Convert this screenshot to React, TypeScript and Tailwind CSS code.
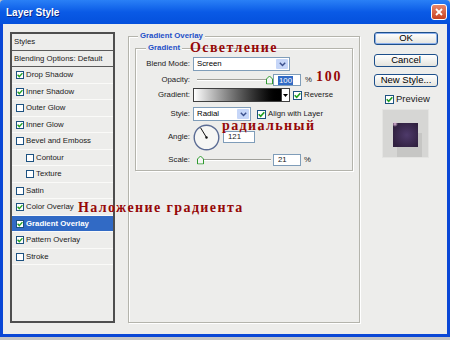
import React from "react";

const items: { t: string; c: boolean; i?: boolean; s?: boolean }[] = [
  { t: "Drop Shadow", c: true },
  { t: "Inner Shadow", c: true },
  { t: "Outer Glow", c: false },
  { t: "Inner Glow", c: true },
  { t: "Bevel and Emboss", c: false },
  { t: "Contour", c: false, i: true },
  { t: "Texture", c: false, i: true },
  { t: "Satin", c: false },
  { t: "Color Overlay", c: true },
  { t: "Gradient Overlay", c: true, s: true },
  { t: "Pattern Overlay", c: true },
  { t: "Stroke", c: false },
];

function Check({ checked, size = 8 }: { checked: boolean; size?: number }) {
  return (
    <span
      className="border border-[#1c5180] bg-white flex items-center justify-center shrink-0"
      style={{ width: size, height: size }}
    >
      {checked && (
        <svg width={size - 2} height={size - 2} viewBox="0 0 6 6">
          <path d="M0.6 2.8 L2.3 4.6 L5.4 1.1" stroke="#22a022" strokeWidth="1.4" fill="none" />
        </svg>
      )}
    </span>
  );
}

function Chevron() {
  return (
    <svg width="7" height="5" viewBox="0 0 7 5">
      <path d="M0.8 0.8 L3.5 3.6 L6.2 0.8" stroke="#3a4f8c" strokeWidth="1.4" fill="none" />
    </svg>
  );
}

function Select({ w, value }: { w: number; value: string }) {
  return (
    <div className="flex h-full border border-[#7f9db9] bg-white items-center shrink-0" style={{ width: w }}>
      <span className="flex-1 pl-[3px] text-black">{value}</span>
      <span className="w-[12px] h-[calc(100%-2px)] mr-[1px] bg-[#c6d6f8] rounded-[1px] flex items-center justify-center">
        <Chevron />
      </span>
    </div>
  );
}

function Thumb() {
  return (
    <svg width="7" height="9" viewBox="0 0 7 9">
      <path d="M0.5 8.5 L0.5 3.5 L3.5 0.5 L6.5 3.5 L6.5 8.5 Z" fill="#f4f4f4" stroke="#2f9a2f" strokeWidth="1" />
    </svg>
  );
}

function Slider({ pos }: { pos: number }) {
  return (
    <div className="relative w-[80px] h-full shrink-0 flex items-center">
      <div className="ml-[4px] w-[74px] h-[2px] border-t border-[#a0a09a] border-b border-b-white" />
      <div className="absolute top-1/2 -translate-y-1/2 flex" style={{ left: pos }}>
        <Thumb />
      </div>
    </div>
  );
}

function Label({ children }: { children: React.ReactNode }) {
  return <span className="w-[54px] text-right shrink-0 text-[#1a1a1a]">{children}</span>;
}

function Input({ w, children }: { w: number; children: React.ReactNode }) {
  return (
    <div className="h-full border border-[#7f9db9] bg-white flex items-center pl-[4px] shrink-0" style={{ width: w }}>
      {children}
    </div>
  );
}

function Button({ children, focus }: { children: React.ReactNode; focus?: boolean }) {
  return (
    <div
      className={
        "h-[13px] w-[64px] rounded-[3px] border border-[#1d4f8a] bg-gradient-to-b from-[#ffffff] to-[#e4e4de] flex items-center justify-center text-[9.5px] text-black " +
        (focus ? "shadow-[inset_0_0_0_1px_#8cb0ec]" : "")
      }
    >
      {children}
    </div>
  );
}

export default function App() {
  return (
    <div className="w-[450px] h-[340px] bg-[#c4c4c4] relative overflow-hidden font-['Liberation_Sans',Arial,sans-serif]">
      <div className="h-[337px] flex flex-col">
        {/* Title bar */}
        <div className="h-[24px] shrink-0 bg-gradient-to-b from-[#2a80f6] via-[#0a5ae6] to-[#0450dc] flex items-center justify-between pl-[6px] pr-[3px] rounded-t-[4px]">
          <span className="text-white text-[10px] font-bold [text-shadow:1px_1px_0_#0a2a8a]">Layer Style</span>
          <div className="w-[16px] h-[16px] rounded-[3px] border border-white bg-gradient-to-b from-[#e8866a] to-[#c8401e] flex items-center justify-center">
            <svg width="8" height="8" viewBox="0 0 8 8">
              <path d="M1 1 L7 7 M7 1 L1 7" stroke="white" strokeWidth="1.8" />
            </svg>
          </div>
        </div>

        {/* Body */}
        <div className="flex-1 border-x-[3px] border-b-[3px] border-[#0a47d6] bg-[#ededeb] flex items-start pl-[7px] text-[7.8px]">
          {/* Left list */}
          <div className="mt-[8px] w-[105px] h-[291px] border-2 border-[#4e4e4e] shrink-0 flex flex-col">
            <div className="h-[17px] border-b border-[#5a5a5a] flex items-center pl-[2px] text-[#1a1a1a]">Styles</div>
            <div className="h-[16px] border-b border-[#5a5a5a] flex items-center pl-[2px] text-[#1a1a1a]">
              Blending Options: Default
            </div>
            {items.map((it) => (
              <div
                key={it.t}
                className={
                  "h-[16.5px] shrink-0 flex items-center gap-[2px] shadow-[inset_0_-1px_0_#fafaf8] " +
                  (it.i ? "pl-[14px] " : "pl-[4px] ") +
                  (it.s ? "bg-[#316ac5] text-white font-bold" : "text-[#1a1a1a]")
                }
              >
                <Check checked={it.c} />
                <span>{it.t}</span>
              </div>
            ))}
          </div>

          {/* Middle group */}
          <div className="relative ml-[13px] mt-[12px] w-[232px] h-[287px] shrink-0 border border-[#b4b4ac] shadow-[1px_1px_0_#ffffff,inset_1px_1px_0_#ffffff]">
            <span className="absolute -top-[6px] left-[9px] px-[2px] bg-[#ededeb] font-bold text-[#1e50c8] leading-[10px]">
              Gradient Overlay
            </span>
            <div className="relative ml-[6px] mt-[11px] w-[218px] h-[123px] border border-[#b4b4ac] shadow-[1px_1px_0_#ffffff,inset_1px_1px_0_#ffffff] flex flex-col">
              <span className="absolute -top-[6px] left-[10px] px-[2px] bg-[#ededeb] font-bold text-[#1e50c8] leading-[10px]">
                Gradient
              </span>
              <div className="mt-[8px] h-[14px] flex items-center">
                <Label>Blend Mode:</Label>
                <div className="ml-[3px] h-full flex">
                  <Select w={97} value="Screen" />
                </div>
              </div>
              <div className="mt-[3px] h-[12px] flex items-center">
                <Label>Opacity:</Label>
                <div className="ml-[3px] h-full flex items-center">
                  <Slider pos={73} />
                  <Input w={28}>
                    <span className="bg-[#316ac5] text-white leading-[9px] px-[1px]">100</span>
                  </Input>
                  <span className="ml-[4px] text-[#1a1a1a]">%</span>
                </div>
              </div>
              <div className="mt-[2px] h-[14px] flex items-center">
                <Label>Gradient:</Label>
                <div className="ml-[3px] h-full flex items-center">
                  <div className="w-[89px] h-full border border-[#404040] bg-gradient-to-r from-white to-black" />
                  <div className="w-[8px] h-full border border-l-0 border-[#404040] bg-white flex items-center justify-center">
                    <svg width="5" height="3" viewBox="0 0 5 3">
                      <path d="M0 0 L5 0 L2.5 3 Z" fill="#000" />
                    </svg>
                  </div>
                  <span className="ml-[3px] flex">
                    <Check checked size={9} />
                  </span>
                  <span className="ml-[2px] text-[#1a1a1a]">Reverse</span>
                </div>
              </div>
              <div className="mt-[5px] h-[14px] flex items-center">
                <Label>Style:</Label>
                <div className="ml-[3px] h-full flex items-center">
                  <Select w={58} value="Radial" />
                  <span className="ml-[6px] flex">
                    <Check checked size={9} />
                  </span>
                  <span className="ml-[2px] text-[#1a1a1a]">Align with Layer</span>
                </div>
              </div>
              <div className="mt-[3px] h-[26px] flex items-center">
                <Label>Angle:</Label>
                <div className="ml-[3px] h-full flex items-center">
                  <svg width="27" height="27" viewBox="0 0 27 27">
                    <circle cx="13.5" cy="13.5" r="12.3" fill="#f6f6f4" stroke="#5b6c94" strokeWidth="1.4" />
                    <line x1="13.5" y1="13.5" x2="7.6" y2="3.8" stroke="#111" strokeWidth="1" />
                    <circle cx="13.5" cy="13.5" r="1.2" fill="#111" />
                  </svg>
                  <div className="ml-[3px] h-[12px] flex">
                    <Input w={32}>
                      <span className="text-[#1a1a1a]">121</span>
                    </Input>
                  </div>
                  <span className="ml-[3px] self-start mt-[4px] text-[#1a1a1a] leading-none">°</span>
                </div>
              </div>
              <div className="mt-[4px] h-[12px] flex items-center">
                <Label>Scale:</Label>
                <div className="ml-[3px] h-full flex items-center">
                  <Slider pos={4} />
                  <Input w={28}>
                    <span className="text-[#1a1a1a]">21</span>
                  </Input>
                  <span className="ml-[3px] text-[#1a1a1a]">%</span>
                </div>
              </div>
            </div>
          </div>

          {/* Right column */}
          <div className="ml-[14px] mt-[8px] w-[64px] shrink-0 flex flex-col">
            <Button focus>OK</Button>
            <div className="mt-[9px]">
              <Button>Cancel</Button>
            </div>
            <div className="mt-[7px]">
              <Button>New Style...</Button>
            </div>
            <div className="mt-[6px] h-[12px] flex items-center pl-[11px] gap-[2px] text-[9.5px] text-[#1a1a1a]">
              <Check checked size={9} />
              <span>Preview</span>
            </div>
            <div className="mt-[4px] ml-[8px] w-[47px] h-[49px] bg-[#d6d6d4] shadow-[inset_0_0_0_1px_#e4e4e2]">
              <svg width="47" height="49" viewBox="0 0 47 49">
                <defs>
                  <radialGradient id="pg" cx="0.55" cy="0.5" r="0.6">
                    <stop offset="0" stopColor="#4e3a6a" />
                    <stop offset="1" stopColor="#30203f" />
                  </radialGradient>
                  <radialGradient id="hl" cx="0.5" cy="0.5" r="0.5">
                    <stop offset="0" stopColor="#e6c0e0" />
                    <stop offset="1" stopColor="#e6c0e0" stopOpacity="0" />
                  </radialGradient>
                </defs>
                <rect x="15" y="24" width="25" height="24" fill="#c6c6c4" />
                <rect x="11" y="14" width="25" height="24" fill="url(#pg)" />
                <circle cx="13" cy="15" r="3" fill="url(#hl)" />
              </svg>
            </div>
          </div>
        </div>
      </div>

      {/* Red annotations */}
      <div className="absolute left-[190px] top-[41px] font-['Liberation_Serif',serif] font-bold text-[14px] tracking-[1.4px] text-[#960808] leading-none">
        Осветление
      </div>
      <div className="absolute left-[316px] top-[70px] font-['Liberation_Serif',serif] font-bold text-[14px] tracking-[1.8px] text-[#960808] leading-none">
        100
      </div>
      <div className="absolute left-[222px] top-[119px] font-['Liberation_Serif',serif] font-bold text-[14px] tracking-[1.4px] text-[#960808] leading-none">
        радиальный
      </div>
      <div className="absolute left-[78px] top-[201px] font-['Liberation_Serif',serif] font-bold text-[14px] tracking-[1.4px] text-[#960808] leading-none">
        Наложение градиента
      </div>
    </div>
  );
}
